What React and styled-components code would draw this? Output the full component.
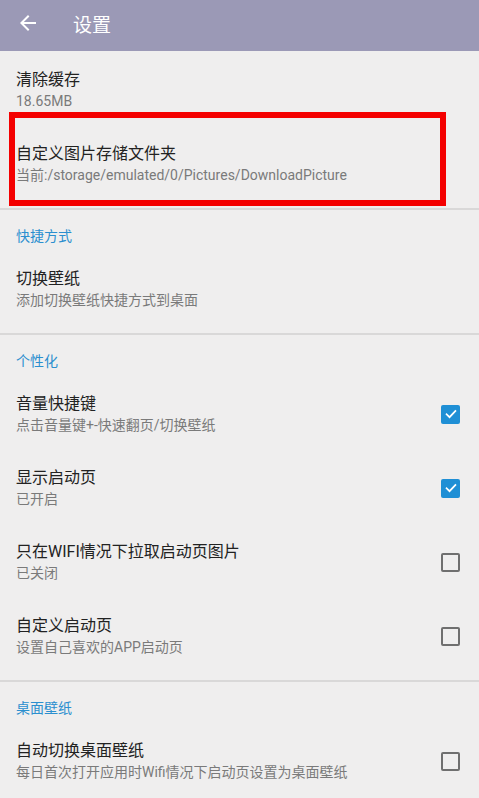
import React from 'react';
import styled, { createGlobalStyle } from 'styled-components';

const GlobalStyle = createGlobalStyle`
  html, body {
    margin: 0;
    padding: 0;
    background: #efeeee;
  }
  body {
    font-family: Roboto, "Noto Sans CJK SC", "Noto Sans", sans-serif;
  }
`;

const sections = [
  {
    items: [
      { title: '清除缓存', summary: '18.65MB' },
      {
        title: '自定义图片存储文件夹',
        summary: '当前:/storage/emulated/0/Pictures/DownloadPicture',
        marked: true,
      },
    ],
  },
  {
    label: '快捷方式',
    items: [{ title: '切换壁纸', summary: '添加切换壁纸快捷方式到桌面' }],
  },
  {
    label: '个性化',
    items: [
      { title: '音量快捷键', summary: '点击音量键+-快速翻页/切换壁纸', check: true },
      { title: '显示启动页', summary: '已开启', check: true },
      { title: '只在WIFI情况下拉取启动页图片', summary: '已关闭', check: false },
      { title: '自定义启动页', summary: '设置自己喜欢的APP启动页', check: false },
    ],
  },
  {
    label: '桌面壁纸',
    items: [
      {
        title: '自动切换桌面壁纸',
        summary: '每日首次打开应用时Wifi情况下启动页设置为桌面壁纸',
        check: false,
      },
    ],
  },
];

const Checkbox = ({ checked }) => (
  <Box $checked={checked}>
    {checked && (
      <svg width="14" height="14" viewBox="0 0 24 24">
        <path
          d="M4.5 12.5l5 5 10-10.5"
          fill="none"
          stroke="#fff"
          strokeWidth="3"
          strokeLinecap="square"
        />
      </svg>
    )}
  </Box>
);

const App = () => {
  return (
    <Page>
      <GlobalStyle />
      <Toolbar>
        <BackButton>
          <svg width="24" height="24" viewBox="0 0 24 24">
            <path
              fill="#fff"
              d="M20 11H7.83l5.59-5.59L12 4l-8 8 8 8 1.41-1.41L7.83 13H20v-2z"
            />
          </svg>
        </BackButton>
        <ToolbarTitle>设置</ToolbarTitle>
      </Toolbar>
      <List>
        {sections.map((section, i) => (
          <Section key={i} $first={i === 0}>
            {section.label && <Category>{section.label}</Category>}
            {section.items.map((item) => (
              <Row key={item.title}>
                <Texts>
                  <Title>{item.title}</Title>
                  <Summary>{item.summary}</Summary>
                </Texts>
                {item.check !== undefined && <Checkbox checked={item.check} />}
                {item.marked && <Highlight />}
              </Row>
            ))}
          </Section>
        ))}
      </List>
    </Page>
  );
};

const Page = styled.div`
  width: 479px;
  min-height: 798px;
  background: #efeeee;
  overflow: hidden;
`;

const Toolbar = styled.header`
  height: 51px;
  background: #9b99b6;
  display: flex;
  align-items: center;
  padding-left: 16px;
  gap: 33px;
`;

const BackButton = styled.div`
  width: 24px;
  height: 24px;
  display: flex;
  margin-top: -5px;
`;

const ToolbarTitle = styled.h1`
  margin: -5px 0 0;
  font-size: 19px;
  font-weight: 400;
  color: #fff;
`;

const List = styled.div`
  padding-top: 2px;
`;

const Section = styled.section`
  border-top: ${({ $first }) => ($first ? 'none' : '2px solid #d9d8d8')};
  margin-top: ${({ $first }) => ($first ? '0' : '7px')};
`;

const Category = styled.div`
  height: 42px;
  padding: 0 16px;
  box-sizing: border-box;
  display: flex;
  align-items: center;
  padding-top: 8px;
  font-size: 14px;
  color: #2b8fcf;
`;

const Row = styled.div`
  position: relative;
  height: 74px;
  display: flex;
  align-items: center;
  padding: 0 19px 0 16px;
  gap: 16px;
`;

const Texts = styled.div`
  flex: 1;
  display: flex;
  flex-direction: column;
  gap: 2px;
  min-width: 0;
`;

const Title = styled.div`
  font-size: 16px;
  line-height: 20px;
  color: #222;
`;

const Summary = styled.div`
  font-size: 14px;
  line-height: 18px;
  color: #7a7a7a;
  white-space: nowrap;
`;

const Box = styled.div`
  width: 19px;
  height: 19px;
  box-sizing: border-box;
  border-radius: 2px;
  display: flex;
  align-items: center;
  justify-content: center;
  background: ${({ $checked }) => ($checked ? '#1f8fd5' : 'transparent')};
  border: ${({ $checked }) => ($checked ? 'none' : '2px solid #6f6f6f')};
`;

const Highlight = styled.div`
  position: absolute;
  left: 9px;
  top: -15px;
  width: 437px;
  height: 94px;
  box-sizing: border-box;
  border: 6px solid #f40000;
  pointer-events: none;
`;

export default App;
